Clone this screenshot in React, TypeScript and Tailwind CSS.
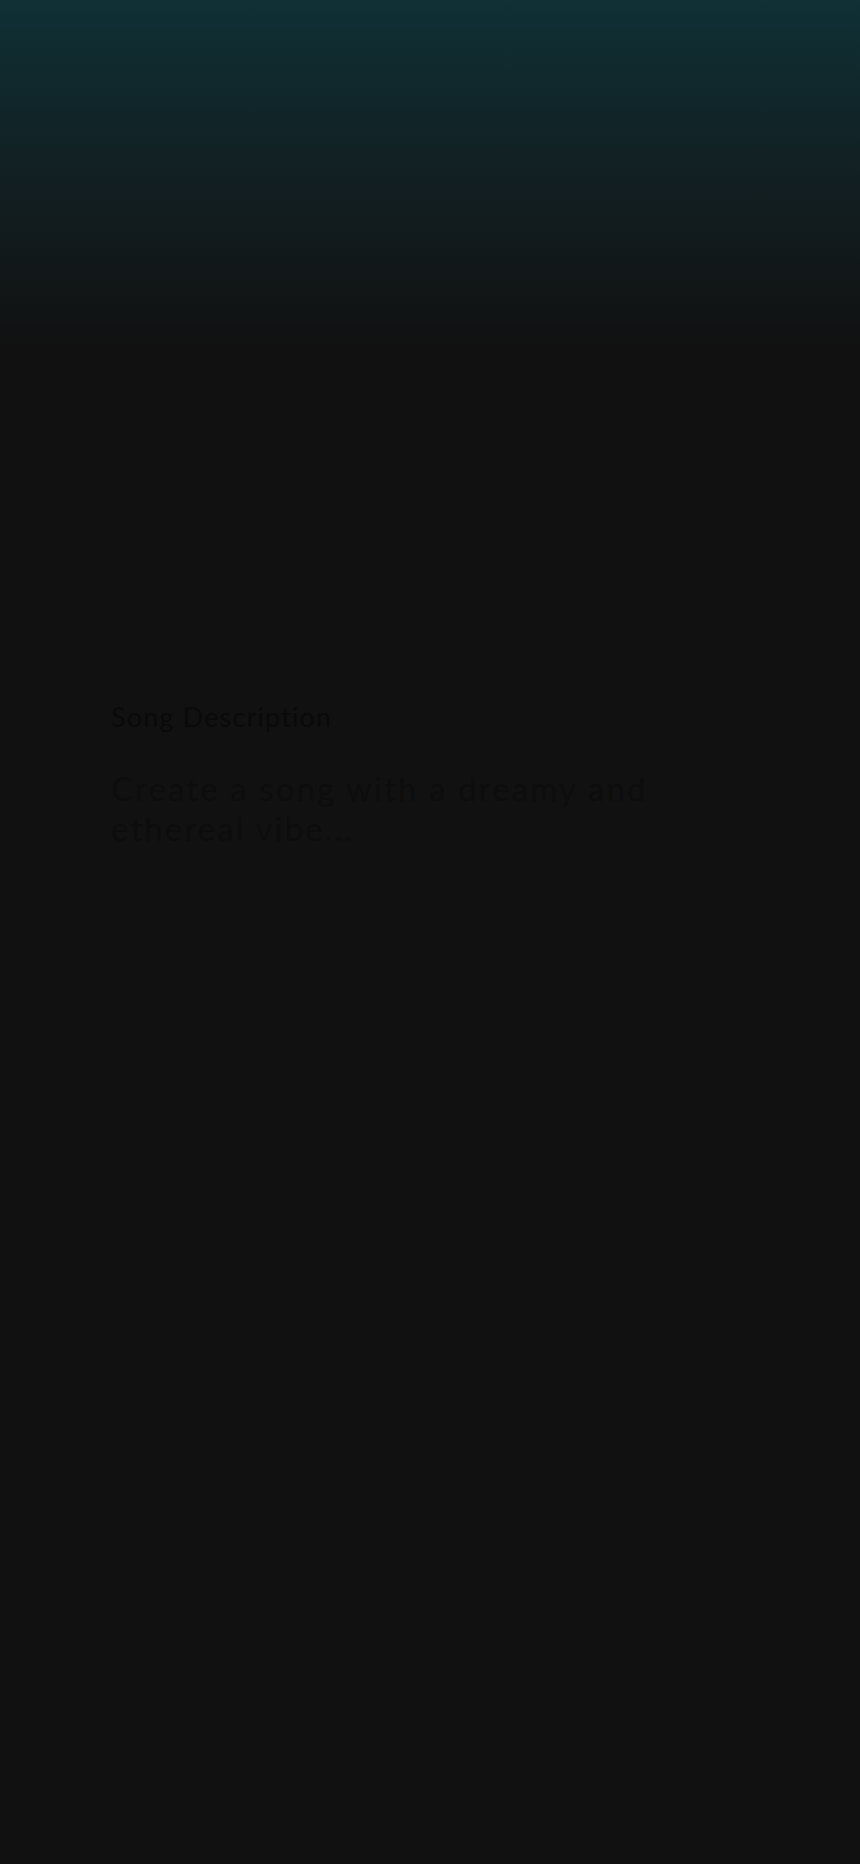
export default function App() {
  return (
    <div
      className="min-h-[1864px] w-full bg-[#111111] bg-[linear-gradient(to_bottom,#0f3035_0px,#121f22_180px,#111111_350px)] bg-no-repeat"
      style={{ fontFamily: "Lato, 'Noto Sans', sans-serif" }}
    >
      <div className="px-[111px] pt-[700px]">
        <label htmlFor="desc" className="block text-[27px] leading-[34px] tracking-[1.15px] text-[#0a0a0a]">
          Song Description
        </label>
        <textarea
          id="desc"
          rows={4}
          placeholder="Create a song with a dreamy and ethereal vibe..."
          className="mt-[34px] block w-full resize-none border-0 bg-transparent p-0 text-[33px] leading-[40px] tracking-[2.1px] text-[#0d0d0d] outline-none placeholder:text-[#0d0d0d]"
        />
      </div>
    </div>
  );
}
